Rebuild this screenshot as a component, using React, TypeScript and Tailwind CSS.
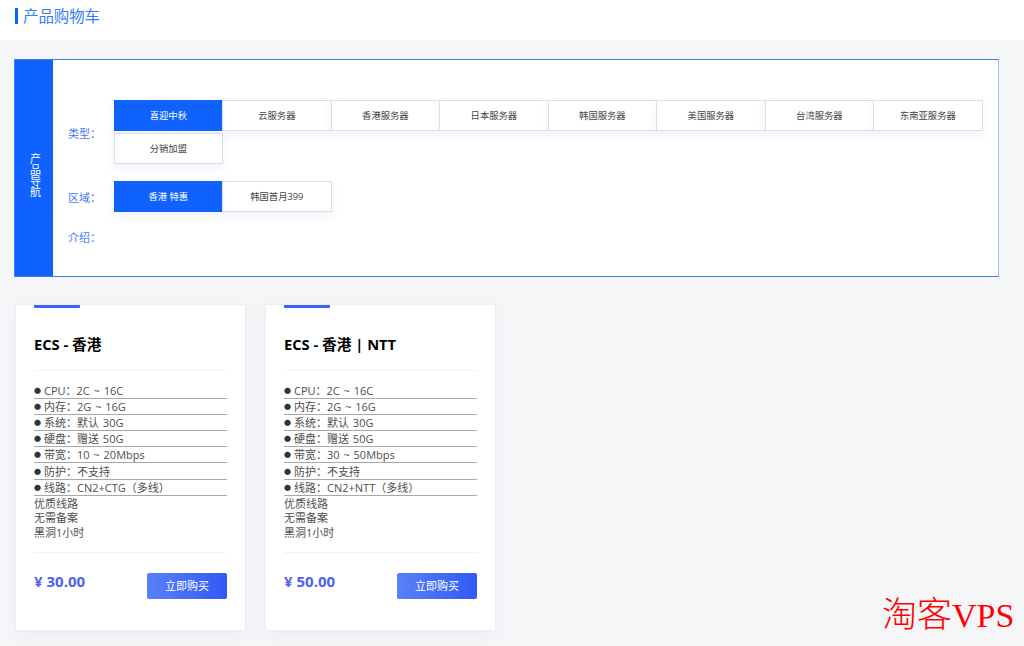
const types = ["喜迎中秋","云服务器","香港服务器","日本服务器","韩国服务器","美国服务器","台湾服务器","东南亚服务器","分销加盟"];
const regions = ["香港 特惠","韩国首月399"];

function Tab({ label, active, overlap }: { label: string; active: boolean; overlap: boolean }) {
  return (
    <div className={`h-[31px] w-[109.5px] flex items-center justify-center text-[9.3px] shadow-[0_4px_10px_rgba(80,90,180,0.08)] ${overlap ? "-ml-px" : "ml-0"} ${active ? "bg-[#0f62fe] text-white" : "bg-white border border-[#d9deee] text-[#444]"}`}>
      {label}
    </div>
  );
}

function Card({ title, bandwidth, line, price }: { title: string; bandwidth: string; line: string; price: string }) {
  const rows = ["CPU：2C ~ 16C","内存：2G ~ 16G","系统：默认 30G","硬盘：赠送 50G",`带宽：${bandwidth}`,"防护：不支持",`线路：${line}（多线）`];
  return (
    <div className="w-[231px] h-[327px] bg-white border border-[#eceef5] px-[18px] shadow-[0_4px_14px_rgba(80,90,150,0.05)]">
      <div className="w-[46px] h-[3px] bg-[#3a62f5] rounded-b-[1px]" />
      <div className="h-[63px] flex items-center border-b border-[#f2f3f9] text-[14.7px] font-bold text-black leading-none pt-[11px]">{title}</div>
      <div className="pt-[12px] text-[11px] text-[#4f4f4f]">
        {rows.map((r) => (
          <div key={r} className="flex items-center h-[16.1px] leading-[15px] border-b border-[#a8a8a8] whitespace-nowrap [word-spacing:1px]">
            <span className="w-[10px] text-[#333] text-[7px]">●</span><span>{r}</span>
          </div>
        ))}
        <div className="leading-[14.7px] pt-px">
          <div>优质线路</div>
          <div>无需备案</div>
          <div>黑洞1小时</div>
        </div>
      </div>
      <div className="mt-[11px] border-t border-[#f2f3f9] pt-[20px] flex justify-between items-start">
        <div className="text-[15px] font-bold text-[#4a63f0] leading-[19px] -mt-px">¥ {price}</div>
        <div className="w-[80px] h-[26px] flex items-center justify-center rounded-[2px] bg-gradient-to-r from-[#5a80f8] to-[#3059f5] text-white text-[11px]">立即购买</div>
      </div>
    </div>
  );
}

export default function App() {
  return (
    <div className="relative w-[1024px] h-[646px] overflow-hidden bg-[#f5f6f8] font-['Open_Sans','Noto_Sans_CJK_SC',sans-serif]">
      <div className="h-[40px] bg-white pl-[15px] pt-[8px] flex items-start">
        <div className="w-[3px] h-[16px] bg-[#0f62fe]" />
        <div className="ml-[5px] text-[15.4px] leading-[18px] text-[#3a7bfa]">产品购物车</div>
      </div>
      <div className="pl-[14px] pt-[19px]">
        <div className="w-[985px] h-[218px] flex border border-[#3b7dfb] border-r-[#9dbdfd] bg-white">
          <div className="w-[38px] bg-[#0f62fe] flex items-center justify-center pt-[13px] pl-px">
            <div className="[writing-mode:vertical-rl] text-[11px] leading-[12px] text-white">产品导航</div>
          </div>
          <div className="flex-1 pl-[15px] pt-[40px]">
            <div className="flex">
              <div className="w-[45.6px] shrink-0 pt-[27px] text-[11px] leading-[14px] text-[#4a78f5]">类型：</div>
              <div className="w-[869px] flex flex-wrap gap-y-[2px]">
                {types.map((t, i) => <Tab key={t} label={t} active={i === 0} overlap={i > 0 && i < 8} />)}
              </div>
            </div>
            <div className="flex mt-[17px]">
              <div className="w-[45.6px] shrink-0 pt-[10px] text-[11px] leading-[14px] text-[#4a78f5]">区域：</div>
              <div className="flex">
                {regions.map((t, i) => <Tab key={t} label={t} active={i === 0} overlap={i > 0} />)}
              </div>
            </div>
            <div className="mt-[19px] text-[11px] leading-[14px] text-[#4a78f5]">介绍：</div>
          </div>
        </div>
        <div className="flex gap-[19px] mt-[27px] pl-px">
          <Card title="ECS - 香港" bandwidth="10 ~ 20Mbps" line="CN2+CTG" price="30.00" />
          <Card title="ECS - 香港 | NTT" bandwidth="30 ~ 50Mbps" line="CN2+NTT" price="50.00" />
        </div>
      </div>
      <div className="absolute left-[882px] top-[596px] text-[#f00] text-[35px] leading-[40px] font-light whitespace-nowrap font-['Liberation_Serif','Noto_Sans_CJK_SC',serif]">
        淘客<span className="text-[34px]">VPS</span>
      </div>
    </div>
  );
}
